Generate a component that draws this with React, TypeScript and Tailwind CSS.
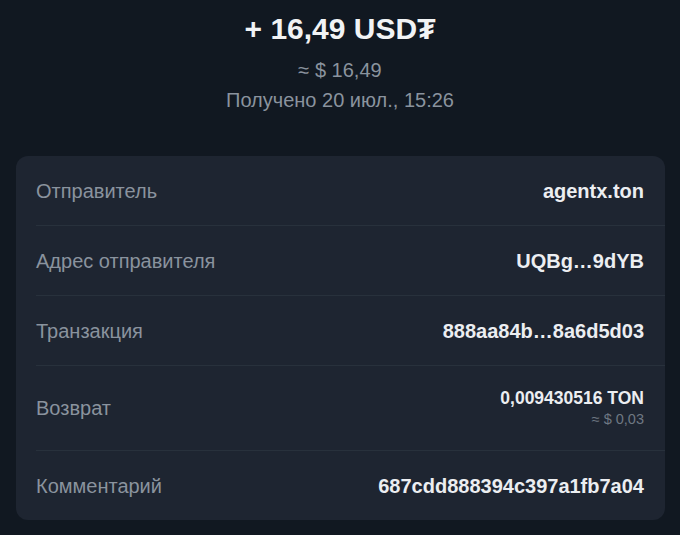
export default function App() {
  const rows = [
    { label: 'Отправитель', value: 'agentx.ton' },
    { label: 'Адрес отправителя', value: 'UQBg…9dYB' },
    { label: 'Транзакция', value: '888aa84b…8a6d5d03' },
  ]

  return (
    <div
      className="w-[680px] h-[535px] bg-[#111821] text-white overflow-hidden"
      style={{ fontFamily: '"Liberation Sans", Arial, sans-serif' }}
    >
      {/* Header */}
      <div className="flex flex-col items-center pt-[11px]">
        <div className="text-[30px] leading-9 font-bold text-[#f1f3f5]">+ 16,49 USD₮</div>
        <div className="mt-[11px] text-[20px] leading-6 text-[#8a939e]">≈ $ 16,49</div>
        <div className="mt-[6px] text-[20px] leading-6 text-[#8a939e]">Получено 20 июл., 15:26</div>
      </div>

      {/* Details card */}
      <div className="mt-[44px] ml-4 w-[649px] rounded-xl bg-[#1e2531]">
        {rows.map((row) => (
          <div
            key={row.label}
            className="ml-5 pr-[21px] h-[70px] flex items-center justify-between border-b border-[#28313c]"
          >
            <span className="text-[20px] text-[#8a939e]">{row.label}</span>
            <span className="text-[20px] font-bold text-[#eceef1]">{row.value}</span>
          </div>
        ))}
        <div className="ml-5 pr-[21px] h-[85px] flex items-center justify-between border-b border-[#28313c]">
          <span className="text-[20px] text-[#8a939e]">Возврат</span>
          <div className="flex flex-col items-end -mt-[2px]">
            <span className="text-[17.5px] leading-5 font-bold text-[#eceef1]">0,009430516 TON</span>
            <span className="mt-[3px] text-[14.5px] leading-4 text-[#6f7883]">≈ $ 0,03</span>
          </div>
        </div>
        <div className="ml-5 pr-[21px] h-[69px] flex items-center justify-between">
          <span className="text-[20px] text-[#8a939e]">Комментарий</span>
          <span className="text-[20px] font-bold text-[#eceef1]">687cdd888394c397a1fb7a04</span>
        </div>
      </div>
    </div>
  )
}
